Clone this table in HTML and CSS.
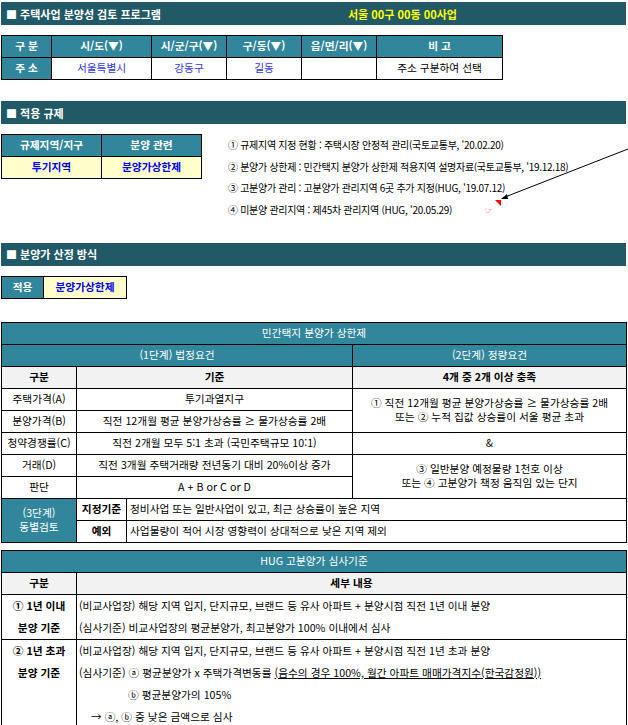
FILE: index.html
```html
<!DOCTYPE html>
<html lang="ko">
<head>
<meta charset="utf-8">
<title>주택사업 분양성 검토 프로그램</title>
<link rel="stylesheet" href="styles.css">
</head>
<body>
<div class="page">
  <div class="bar bar-first"><span class="bar-title">■ 주택사업 분양성 검토 프로그램</span><span class="bar-project">서울 00구 00동 00사업</span></div>

  <table class="grid addr">
    <colgroup><col class="a1"><col class="a2"><col class="a3"><col class="a3"><col class="a3"><col class="a6"></colgroup>
    <tr class="head">
      <td class="teal">구 분</td><td class="teal">시/도(▼)</td><td class="teal">시/군/구(▼)</td><td class="teal">구/동(▼)</td><td class="teal">읍/면/리(▼)</td><td class="teal">비 고</td>
    </tr>
    <tr>
      <td class="teal b">주 소</td><td class="blue">서울특별시</td><td class="blue">강동구</td><td class="blue">길동</td><td></td><td>주소 구분하여 선택</td>
    </tr>
  </table>

  <div class="bar bar-gap"><span class="bar-title">■ 적용 규제</span></div>

  <div class="reg">
    <table class="grid regtab">
      <colgroup><col class="r1"><col class="r1"></colgroup>
      <tr><td class="teal">규제지역/지구</td><td class="teal">분양 관련</td></tr>
      <tr><td class="yellow">투기지역</td><td class="yellow">분양가상한제</td></tr>
    </table>
    <ol class="notes">
      <li>① 규제지역 지정 현황 : 주택시장 안정적 관리(국토교통부, '20.02.20)</li>
      <li>② 분양가 상한제 : 민간택지 분양가 상한제 적용지역 설명자료(국토교통부, '19.12.18)</li>
      <li>③ 고분양가 관리 : 고분양가 관리지역 6곳 추가 지정(HUG, '19.07.12)</li>
      <li>④ 미분양 관리지역 : 제45차 관리지역 (HUG, '20.05.29)</li>
    </ol>
  </div>

  <div class="bar bar-third"><span class="bar-title">■ 분양가 산정 방식</span></div>

  <table class="grid apply">
    <colgroup><col class="p1"><col class="p2"></colgroup>
    <tr><td class="teal">적용</td><td class="yellow">분양가상한제</td></tr>
  </table>

  <table class="grid cap">
    <colgroup><col class="k1"><col class="k2"><col class="k3"><col class="k4"></colgroup>
    <tr><td class="teal plain" colspan="4">민간택지 분양가 상한제</td></tr>
    <tr><td class="teal plain" colspan="3">(1단계) 법정요건</td><td class="teal plain">(2단계) 정량요건</td></tr>
    <tr class="gray"><td>구분</td><td colspan="2">기준</td><td>4개 중 2개 이상 충족</td></tr>
    <tr><td>주택가격(A)</td><td colspan="2">투기과열지구</td><td rowspan="2" class="two">① 직전 12개월 평균 분양가상승률 ≥ 물가상승률 2배<br>또는 ② 누적 집값 상승률이 서울 평균 초과</td></tr>
    <tr><td>분양가격(B)</td><td colspan="2">직전 12개월 평균 분양가상승률 ≥ 물가상승률 2배</td></tr>
    <tr><td>청약경쟁률(C)</td><td colspan="2">직전 2개월 모두 5:1 초과 (국민주택규모 10:1)</td><td>&amp;</td></tr>
    <tr><td>거래(D)</td><td colspan="2">직전 3개월 주택거래량 전년동기 대비 20%이상 증가</td><td rowspan="2" class="two">③ 일반분양 예정물량 1천호 이상<br>또는 ④ 고분양가 책정 움직임 있는 단지</td></tr>
    <tr><td>판단</td><td colspan="2">A + B or C or D</td></tr>
    <tr><td rowspan="2" class="teal plain two">(3단계)<br>동별검토</td><td class="b">지정기준</td><td colspan="2" class="left">정비사업 또는 일반사업이 있고, 최근 상승률이 높은 지역</td></tr>
    <tr><td class="b">예외</td><td colspan="2" class="left">사업물량이 적어 시장 영향력이 상대적으로 낮은 지역 제외</td></tr>
  </table>

  <table class="grid hug">
    <colgroup><col class="h1"><col class="h2"></colgroup>
    <tr><td class="teal plain" colspan="2">HUG 고분양가 심사기준</td></tr>
    <tr class="gray"><td>구분</td><td>세부 내용</td></tr>
    <tr class="multi">
      <td class="b"><div class="ln">① 1년 이내</div><div class="ln">분양 기준</div></td>
      <td class="left"><div class="ln">(비교사업장) 해당 지역 입지, 단지규모, 브랜드 등 유사 아파트 + 분양시점 직전 1년 이내 분양</div><div class="ln">(심사기준) 비교사업장의 평균분양가, 최고분양가 100% 이내에서 심사</div></td>
    </tr>
    <tr class="multi top">
      <td class="b"><div class="ln">② 1년 초과</div><div class="ln">분양 기준</div></td>
      <td class="left">
        <div class="ln">(비교사업장) 해당 지역 입지, 단지규모, 브랜드 등 유사 아파트 + 분양시점 직전 1년 초과 분양</div>
        <div class="ln">(심사기준) ⓐ 평균분양가 x 주택가격변동률 <u>(음수의 경우 100%, 월간 아파트 매매가격지수(한국감정원))</u></div>
        <div class="ln ind-b">ⓑ 평균분양가의 105%</div>
        <div class="ln ind-c">→ ⓐ, ⓑ 중 낮은 금액으로 심사</div>
      </td>
    </tr>
  </table>

  <svg class="overlay" width="628" height="725" viewBox="0 0 628 725" aria-hidden="true">
    <line x1="628" y1="149" x2="505" y2="197" stroke="#000" stroke-width="1"/>
    <polygon points="501,199 507,194 508,199" fill="#000"/>
    <polygon points="495,200 501,200 501,206" fill="#ff0000"/>
  </svg>
  <span class="hand">☞</span>
</div>
</body>
</html>
```

FILE: styles.css
```css
* { box-sizing: border-box; }
html, body { margin: 0; padding: 0; background: #fff; }
body {
  font-family: "Noto Sans CJK KR", "Noto Sans", sans-serif;
  font-size: 10.7px;
  color: #000;
}
.page {
  position: relative;
  width: 628px;
  height: 725px;
  overflow: hidden;
  padding: 2px 2px 0 1px;
}
.bar {
  height: 23px;
  background: #215967;
  color: #fff;
  font-weight: bold;
  font-size: 11px;
  display: grid;
  grid-template-columns: 342px 1fr;
  align-items: center;
  padding-left: 5px;
}
.bar-project { color: #ffff00; }
.bar-gap { margin-top: 21px; }
.bar-third { margin-top: 22px; }

table.grid {
  border-collapse: collapse;
  table-layout: fixed;
}
table.grid td {
  border: 1px solid #000;
  height: 22px;
  padding: 0 3px;
  text-align: center;
  vertical-align: middle;
  white-space: nowrap;
  line-height: 1.2;
}
.teal { background: #31869b; color: #fff; font-weight: bold; }
.teal.plain { font-weight: normal; }
.b { font-weight: bold; }
.blue { color: #3333ff; }
.yellow { background: #ffffcc; color: #0000ff; font-weight: bold; }
.gray td { background: #f2f2f2; font-weight: bold; }
.left { text-align: left !important; }

.addr { margin-top: 10px; width: 501px; }
.a1 { width: 50px; }
.a2 { width: 100px; }
.a3 { width: 75px; }
.a6 { width: 126px; }

.reg {
  display: flex;
  align-items: flex-start;
  margin-top: 10px;
}
.regtab { width: 201px; }
.r1 { width: 100px; }
.notes {
  list-style: none;
  margin: 0 0 0 26px;
  padding: 0;
  font-size: 10px;
  letter-spacing: -0.3px;
  line-height: 21.7px;
}

.apply { margin-top: 10px; width: 125px; }
.p1 { width: 42px; }
.p2 { width: 83px; }

.cap { margin-top: 23px; width: 625px; }
.k1 { width: 75px; }
.k2 { width: 50px; }
.k3 { width: 226px; }
.k4 { width: 274px; }
table.grid td.two { line-height: 14px; }

.hug { margin-top: 7px; width: 625px; }
.h1 { width: 75px; }
.h2 { width: 550px; }
.hug .multi td { padding: 0 2px; }
.hug .top td { vertical-align: top; }
.ln { height: 22px; line-height: 22px; }
.ind-b { padding-left: 49px; }
.ind-c { padding-left: 12px; }

.overlay {
  position: absolute;
  left: 0;
  top: 0;
  pointer-events: none;
}
.hand {
  position: absolute;
  left: 485px;
  top: 206px;
  color: #ff0000;
  font-family: "DejaVu Sans", sans-serif;
  font-size: 9px;
  line-height: 1;
}
```
